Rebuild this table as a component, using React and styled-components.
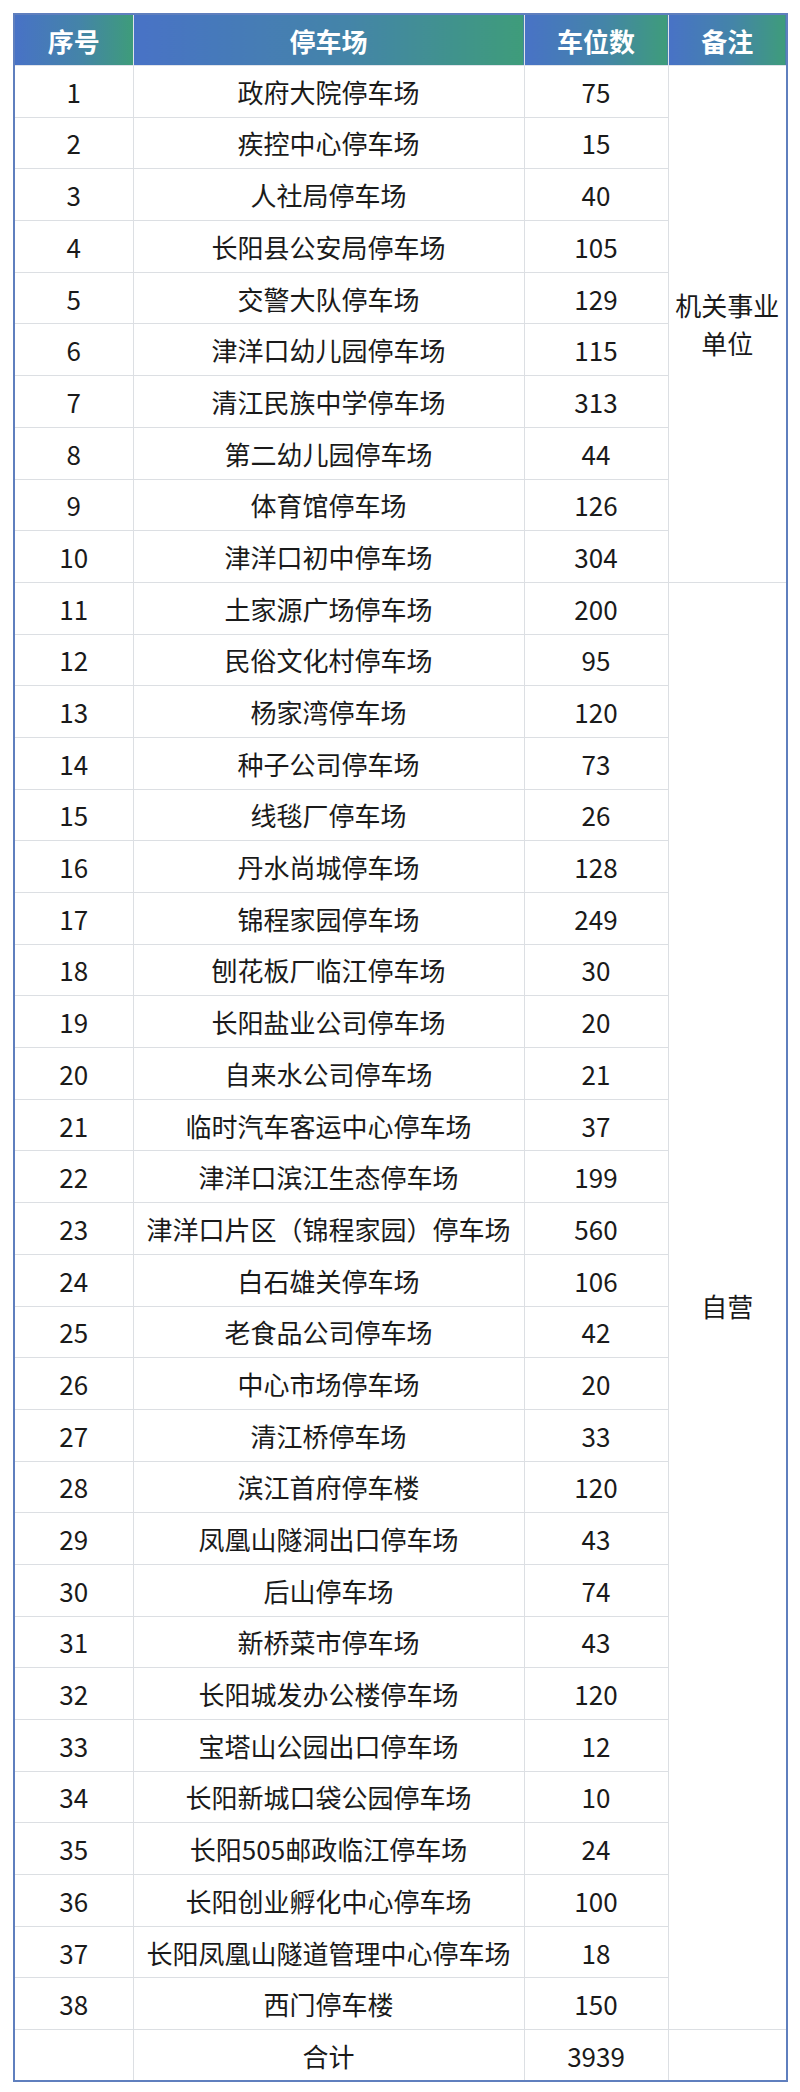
import React from "react";
import styled, { createGlobalStyle } from "styled-components";

const GlobalStyle = createGlobalStyle`
    body {
        margin: 0;
        background: #ffffff;
        font-family: "Noto Sans CJK SC", "Noto Sans", sans-serif;
    }
`;

const Page = styled.div`
    padding: 13px 14px 12px 13px;
`;

const Table = styled.table`
    width: 773px;
    border-collapse: collapse;
    table-layout: fixed;
    border: 2px solid #5f7fbe;
    color: #1a1a1a;
    font-size: 26px;
`;

const HeadCell = styled.th`
    height: 50px;
    padding: 0;
    background: linear-gradient(90deg, #4872c6 0%, #4484a8 55%, #3e9c7a 100%);
    color: #ffffff;
    font-weight: 700;
    font-size: 26px;
    text-align: center;
    border: 1.5px solid #dfe3ea;
    border-top: none;
`;

const Row = styled.tr`
    height: 51.7px;
`;

const Cell = styled.td`
    padding: 0 4px;
    text-align: center;
    vertical-align: middle;
    border: 1.5px solid #dcdfe3;
    white-space: nowrap;
    line-height: 1.2;
`;

const Note = styled(Cell)`
    white-space: normal;
    line-height: 38px;
    padding: 0 6px;
`;

const lots = [
    ["政府大院停车场", 75],
    ["疾控中心停车场", 15],
    ["人社局停车场", 40],
    ["长阳县公安局停车场", 105],
    ["交警大队停车场", 129],
    ["津洋口幼儿园停车场", 115],
    ["清江民族中学停车场", 313],
    ["第二幼儿园停车场", 44],
    ["体育馆停车场", 126],
    ["津洋口初中停车场", 304],
    ["土家源广场停车场", 200],
    ["民俗文化村停车场", 95],
    ["杨家湾停车场", 120],
    ["种子公司停车场", 73],
    ["线毯厂停车场", 26],
    ["丹水尚城停车场", 128],
    ["锦程家园停车场", 249],
    ["刨花板厂临江停车场", 30],
    ["长阳盐业公司停车场", 20],
    ["自来水公司停车场", 21],
    ["临时汽车客运中心停车场", 37],
    ["津洋口滨江生态停车场", 199],
    ["津洋口片区（锦程家园）停车场", 560],
    ["白石雄关停车场", 106],
    ["老食品公司停车场", 42],
    ["中心市场停车场", 20],
    ["清江桥停车场", 33],
    ["滨江首府停车楼", 120],
    ["凤凰山隧洞出口停车场", 43],
    ["后山停车场", 74],
    ["新桥菜市停车场", 43],
    ["长阳城发办公楼停车场", 120],
    ["宝塔山公园出口停车场", 12],
    ["长阳新城口袋公园停车场", 10],
    ["长阳505邮政临江停车场", 24],
    ["长阳创业孵化中心停车场", 100],
    ["长阳凤凰山隧道管理中心停车场", 18],
    ["西门停车楼", 150],
];

const notes = {
    0: { text: "机关事业单位", span: 10 },
    10: { text: "自营", span: 28 },
};

const total = lots.reduce((sum, [, n]) => sum + n, 0);

const App = () => {
    return (
        <Page>
            <GlobalStyle />
            <Table>
                <colgroup>
                    <col style={{ width: 119 }} />
                    <col style={{ width: 391 }} />
                    <col style={{ width: 144 }} />
                    <col style={{ width: 119 }} />
                </colgroup>
                <thead>
                    <tr>
                        <HeadCell>序号</HeadCell>
                        <HeadCell>停车场</HeadCell>
                        <HeadCell>车位数</HeadCell>
                        <HeadCell>备注</HeadCell>
                    </tr>
                </thead>
                <tbody>
                    {lots.map(([name, count], i) => (
                        <Row key={name}>
                            <Cell>{i + 1}</Cell>
                            <Cell>{name}</Cell>
                            <Cell>{count}</Cell>
                            {notes[i] && (
                                <Note rowSpan={notes[i].span}>
                                    {notes[i].text}
                                </Note>
                            )}
                        </Row>
                    ))}
                    <Row>
                        <Cell />
                        <Cell>合计</Cell>
                        <Cell>{total}</Cell>
                        <Cell />
                    </Row>
                </tbody>
            </Table>
        </Page>
    );
};

export default App;
